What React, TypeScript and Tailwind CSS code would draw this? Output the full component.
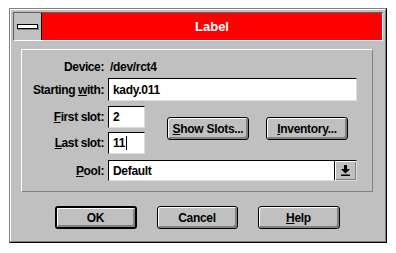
import React from "react";

const font = { fontFamily: '"Liberation Sans", Arial, sans-serif' };

function WinButton({
  children,
  isDefault,
  className = "",
}: {
  children: React.ReactNode;
  isDefault?: boolean;
  className?: string;
}) {
  return (
    <div
      className={`flex items-center justify-center rounded-[3px] bg-[#c0c0c0] text-[12px] font-bold tracking-[-0.3px] text-black ${
        isDefault ? "border-2" : "border"
      } border-black shadow-[inset_1px_1px_0_#ffffff,inset_-2px_-2px_0_#808080] ${className}`}
    >
      <span className="leading-none">{children}</span>
    </div>
  );
}

function Field({ children, className = "" }: { children?: React.ReactNode; className?: string }) {
  return (
    <div
      className={`flex items-center bg-white border-t border-l border-t-black border-l-black border-r border-b border-r-[#dcdcdc] border-b-[#dcdcdc] pl-[4px] text-[12px] font-bold tracking-[-0.3px] text-black ${className}`}
    >
      {children}
    </div>
  );
}

function Label({ children, className = "" }: { children: React.ReactNode; className?: string }) {
  return (
    <div className={`w-[82px] shrink-0 text-right text-[12px] font-bold tracking-[-0.4px] text-black leading-none ${className}`}>
      {children}
    </div>
  );
}

export default function App() {
  return (
    <div className="w-[396px] h-[253px] bg-white pt-[8px] pl-[9px]" style={font}>
      {/* window frame */}
      <div className="w-[378px] h-[235px] border border-t-[#808080] border-l-[#808080] border-r-black border-b-black">
        <div className="h-full border border-t-white border-l-white border-r-[#808080] border-b-[#808080] bg-[#c0c0c0] p-[2px] flex flex-col">
          {/* title bar */}
          <div className="flex h-[29px] border-t border-l border-t-[#606060] border-l-[#606060] border-b border-b-white">
            <div className="w-[28px] flex items-center justify-center border-r border-r-black bg-[#c0c0c0]">
              <div className="w-[21px] h-[5px] bg-white border border-black shadow-[1px_1px_0_#808080]" />
            </div>
            <div className="flex-1 bg-[#ff0000] border-r border-r-white flex items-center justify-center">
              <span className="text-white font-bold text-[13px] leading-none">Label</span>
            </div>
          </div>

          {/* group box */}
          <div className="mt-[8px] ml-[8px] w-[352px] h-[143px] border border-t-white border-l-white border-r-[#808080] border-b-[#808080] flex flex-col pt-[9px]">
            <div className="flex items-center h-[16px]">
              <Label>Device:</Label>
              <span className="ml-[6px] text-[12px] font-bold tracking-[-0.3px] text-black leading-none">/dev/rct4</span>
            </div>

            <div className="flex items-center mt-[3px] h-[23px]">
              <Label>
                Starting <u>w</u>ith:
              </Label>
              <Field className="ml-[4px] w-[249px] h-full">kady.011</Field>
            </div>

            <div className="flex items-start mt-[5px]">
              <div className="flex flex-col">
                <div className="flex items-center h-[22px]">
                  <Label>
                    <u>F</u>irst slot:
                  </Label>
                  <Field className="ml-[4px] w-[37px] h-full">2</Field>
                </div>
                <div className="flex items-center h-[22px] mt-[4px]">
                  <Label>
                    <u>L</u>ast slot:
                  </Label>
                  <Field className="ml-[4px] w-[37px] h-full">
                    11<span className="inline-block w-px h-[14px] bg-black ml-px" />
                  </Field>
                </div>
              </div>
              <div className="flex mt-[11px] ml-[22px] gap-[17px]">
                <WinButton className="w-[82px] h-[23px]">
                  <u>S</u>how Slots...
                </WinButton>
                <WinButton className="w-[82px] h-[23px]">
                  <u>I</u>nventory...
                </WinButton>
              </div>
            </div>

            <div className="flex items-center mt-[6px] h-[21px]">
              <Label>
                <u>P</u>ool:
              </Label>
              <Field className="ml-[4px] w-[249px] h-full pr-0">
                <span className="flex-1">Default</span>
                <div className="w-[22px] h-full flex items-center justify-center bg-[#c0c0c0] border-l border-black shadow-[inset_1px_1px_0_#ffffff,inset_-1px_-1px_0_#808080]">
                  <svg width="9" height="11" viewBox="0 0 9 11">
                    <path d="M3 0h3v4h3L4.5 8.5 0 4h3z" fill="black" />
                    <rect x="0" y="9.5" width="9" height="1.5" fill="black" />
                  </svg>
                </div>
              </Field>
            </div>
          </div>

          {/* dialog buttons */}
          <div className="flex justify-center gap-[20px] mt-[14px] -ml-[2px]">
            <WinButton isDefault className="w-[82px] h-[23px]">
              OK
            </WinButton>
            <WinButton className="w-[81px] h-[23px]">Cancel</WinButton>
            <WinButton className="w-[82px] h-[23px]">
              <u>H</u>elp
            </WinButton>
          </div>
        </div>
      </div>
    </div>
  );
}
